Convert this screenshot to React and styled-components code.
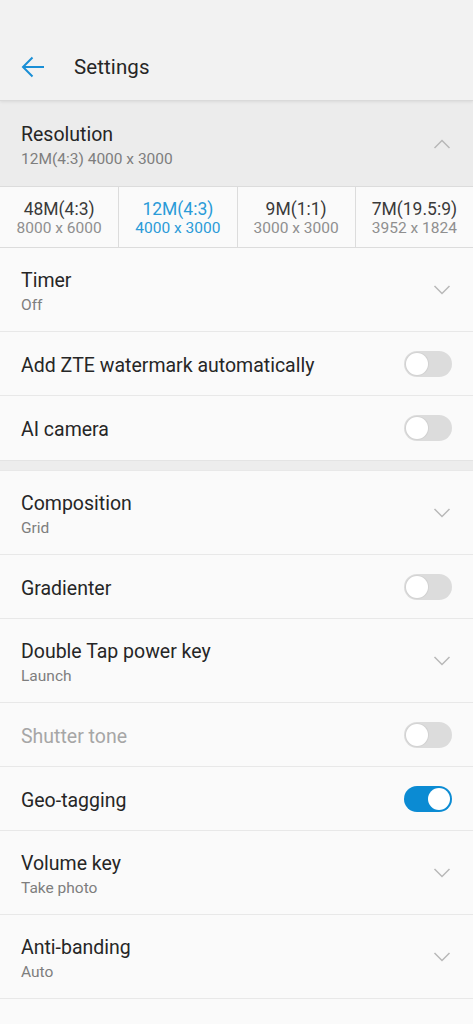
import React from "react";
import styled, { createGlobalStyle } from "styled-components";

const Global = createGlobalStyle`
  html, body { margin: 0; padding: 0; background: #fafafa; }
  body { font-family: Roboto, "Noto Sans", "Liberation Sans", sans-serif; -webkit-font-smoothing: antialiased; }
  * { box-sizing: border-box; }
`;

const Page = styled.div`
  width: 473px;
  height: 1024px;
  overflow: hidden;
  background: #fafafa;
`;

const Header = styled.header`
  height: 101px;
  padding-top: 34px;
  background: #f2f2f2;
  border-bottom: 1px solid #dadada;
  box-shadow: 0 1px 3px rgba(0, 0, 0, 0.08);
  position: relative;
  z-index: 1;
`;

const Toolbar = styled.div`
  height: 66px;
  display: flex;
  align-items: center;
  padding-left: 21px;
`;

const BackButton = styled.button`
  border: 0;
  background: none;
  padding: 0;
  width: 26px;
  height: 24px;
  display: flex;
  align-items: center;
  margin-right: 27px;
`;

const Title = styled.h1`
  margin: 0;
  font-size: 20.5px;
  font-weight: 400;
  color: #262626;
  letter-spacing: 0.1px;
`;

const ResolutionHead = styled.div`
  height: 85px;
  background: #ececec;
  display: flex;
  align-items: center;
  justify-content: space-between;
  padding: 0 21px;
`;

const TextBlock = styled.div`
  display: flex;
  flex-direction: column;
  gap: 2px;
  padding-top: ${(p) => (p.$low ? "8px" : "4px")};
`;

const ItemTitle = styled.div`
  font-size: 19.5px;
  line-height: 24px;
  color: ${(p) => (p.$disabled ? "#a6a6a6" : "#262626")};
`;

const ItemSub = styled.div`
  font-size: 15.5px;
  line-height: 20px;
  color: #7e7e7e;
`;

const Options = styled.div`
  display: grid;
  grid-template-columns: repeat(4, 1fr);
  background: #fafafa;
  border-top: 1px solid #dcdcdc;
  border-bottom: 1px solid #dcdcdc;
  height: 62px;
`;

const Option = styled.div`
  display: flex;
  flex-direction: column;
  align-items: center;
  justify-content: center;
  padding-top: 3px;
  border-left: ${(p) => (p.$first ? "0" : "1px solid #dcdcdc")};
  color: ${(p) => (p.$active ? "#2a9bd8" : "#3a3a3a")};
`;

const OptMain = styled.div`
  font-size: 17.5px;
  line-height: 20px;
`;

const OptSub = styled.div`
  font-size: 15.5px;
  line-height: 19px;
  color: ${(p) => (p.$active ? "#2a9bd8" : "#8f8f8f")};
`;

const Row = styled.div`
  height: ${(p) => (p.$tall ? "84px" : "64px")};
  display: flex;
  align-items: center;
  justify-content: space-between;
  padding: 0 21px;
  border-bottom: ${(p) => (p.$last ? "0" : "1px solid #e8e8e8")};
  background: #fafafa;
`;

const Gap = styled.div`
  height: 11px;
  background: #ededed;
  border-top: 1px solid #e4e4e4;
  border-bottom: 1px solid #e8e8e8;
`;

const Track = styled.div`
  width: 48px;
  height: 26px;
  border-radius: 13px;
  background: ${(p) => (p.$on ? "#0b8bd3" : "#dcdcdc")};
  position: relative;
`;

const Knob = styled.div`
  position: absolute;
  top: 2px;
  left: ${(p) => (p.$on ? "24px" : "2px")};
  width: 22px;
  height: 22px;
  border-radius: 50%;
  background: #ffffff;
  box-shadow: ${(p) => (p.$on ? "none" : "0 0 0 1px #d2d2d2")};
`;

const ChevronWrap = styled.div`
  width: 18px;
  display: flex;
  justify-content: center;
  margin-right: 1px;
`;

const Toggle = ({ on }) => (
  <Track $on={on}>
    <Knob $on={on} />
  </Track>
);

const Chevron = ({ up }) => (
  <ChevronWrap>
    <svg width="18" height="10" viewBox="0 0 18 10">
      <path
        d={up ? "M1.5 9 L9 1.5 L16.5 9" : "M1.5 1 L9 8.5 L16.5 1"}
        fill="none"
        stroke="#b8b8b8"
        strokeWidth="1.5"
      />
    </svg>
  </ChevronWrap>
);

const options = [
  ["48M(4:3)", "8000 x 6000"],
  ["12M(4:3)", "4000 x 3000", true],
  ["9M(1:1)", "3000 x 3000"],
  ["7M(19.5:9)", "3952 x 1824"],
];

const Item = ({ title, sub, toggle, on, disabled, last, low }) => (
  <Row $tall={!!sub} $last={last}>
    <TextBlock $low={low}>
      <ItemTitle $disabled={disabled}>{title}</ItemTitle>
      {sub && <ItemSub>{sub}</ItemSub>}
    </TextBlock>
    {toggle ? <Toggle on={on} /> : <Chevron />}
  </Row>
);

export default function App() {
  return (
    <Page>
      <Global />
      <Header>
        <Toolbar>
          <BackButton aria-label="Back">
            <svg width="24" height="22" viewBox="0 0 24 22">
              <path
                d="M23 11 H2 M11.5 1.5 L2 11 L11.5 20.5"
                fill="none"
                stroke="#1a8fd6"
                strokeWidth="2"
              />
            </svg>
          </BackButton>
          <Title>Settings</Title>
        </Toolbar>
      </Header>
      <ResolutionHead>
        <TextBlock>
          <ItemTitle>Resolution</ItemTitle>
          <ItemSub>12M(4:3) 4000 x 3000</ItemSub>
        </TextBlock>
        <Chevron up />
      </ResolutionHead>
      <Options>
        {options.map(([a, b, active], i) => (
          <Option key={a} $first={i === 0} $active={active}>
            <OptMain>{a}</OptMain>
            <OptSub $active={active}>{b}</OptSub>
          </Option>
        ))}
      </Options>
      <Item title="Timer" sub="Off" />
      <Item title="Add ZTE watermark automatically" toggle />
      <Item title="AI camera" toggle last />
      <Gap />
      <Item title="Composition" sub="Grid" />
      <Item title="Gradienter" toggle />
      <Item title="Double Tap power key" sub="Launch" />
      <Item title="Shutter tone" toggle disabled />
      <Item title="Geo-tagging" toggle on />
      <Item title="Volume key" sub="Take photo" />
      <Item title="Anti-banding" sub="Auto" />
      <Item title="Quick capture" sub="Off" low />
    </Page>
  );
}
